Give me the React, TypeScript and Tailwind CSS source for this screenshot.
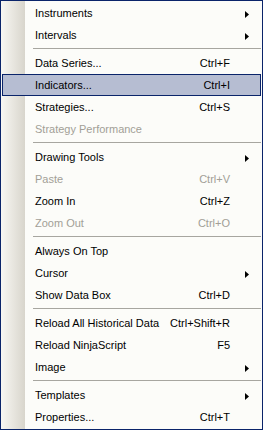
import React from "react";

type Item =
  | { sep: true }
  | { sep?: false; label: string; shortcut?: string; sub?: boolean; disabled?: boolean; active?: boolean };

const items: Item[] = [
  { label: "Instruments", sub: true },
  { label: "Intervals", sub: true },
  { sep: true },
  { label: "Data Series...", shortcut: "Ctrl+F" },
  { label: "Indicators...", shortcut: "Ctrl+I", active: true },
  { label: "Strategies...", shortcut: "Ctrl+S" },
  { label: "Strategy Performance", disabled: true },
  { sep: true },
  { label: "Drawing Tools", sub: true },
  { label: "Paste", shortcut: "Ctrl+V", disabled: true },
  { label: "Zoom In", shortcut: "Ctrl+Z" },
  { label: "Zoom Out", shortcut: "Ctrl+O", disabled: true },
  { sep: true },
  { label: "Always On Top" },
  { label: "Cursor", sub: true },
  { label: "Show Data Box", shortcut: "Ctrl+D" },
  { sep: true },
  { label: "Reload All Historical Data", shortcut: "Ctrl+Shift+R" },
  { label: "Reload NinjaScript", shortcut: "F5" },
  { label: "Image", sub: true },
  { sep: true },
  { label: "Templates", sub: true },
  { label: "Properties...", shortcut: "Ctrl+T" },
];

function Arrow() {
  return (
    <svg width="4" height="7" viewBox="0 0 4 7" className="absolute right-[11px] top-[8px]">
      <polygon points="0,0 4,3.5 0,7" fill="#000" />
    </svg>
  );
}

export default function App() {
  return (
    <div
      className="w-[263px] h-[430px] border border-[#0a246a] p-[1px] bg-[linear-gradient(to_right,#f8f7f3_0px,#d8d5cc_24px,#fcfcf9_24px)] text-[11px] leading-[20px] text-black select-none"
      style={{ fontFamily: '"Liberation Sans", Arial, sans-serif' }}
    >
      {items.map((it, i) =>
        it.sep ? (
          <div key={i} className="h-[6px] pl-[31px] pt-[2px]">
            <div className="h-px bg-[#a7a6a0]" />
          </div>
        ) : (
          <div
            key={i}
            className={
              "relative h-[22px] flex items-center pl-[32px] pr-[30px] border " +
              (it.active ? "bg-[#b6bdd2] border-[#0a246a]" : "border-transparent") +
              (it.disabled ? " text-[#a29f97]" : "")
            }
          >
            <span className="flex-1 whitespace-nowrap">{it.label}</span>
            {it.shortcut && <span className="whitespace-nowrap">{it.shortcut}</span>}
            {it.sub && <Arrow />}
          </div>
        )
      )}
    </div>
  );
}
